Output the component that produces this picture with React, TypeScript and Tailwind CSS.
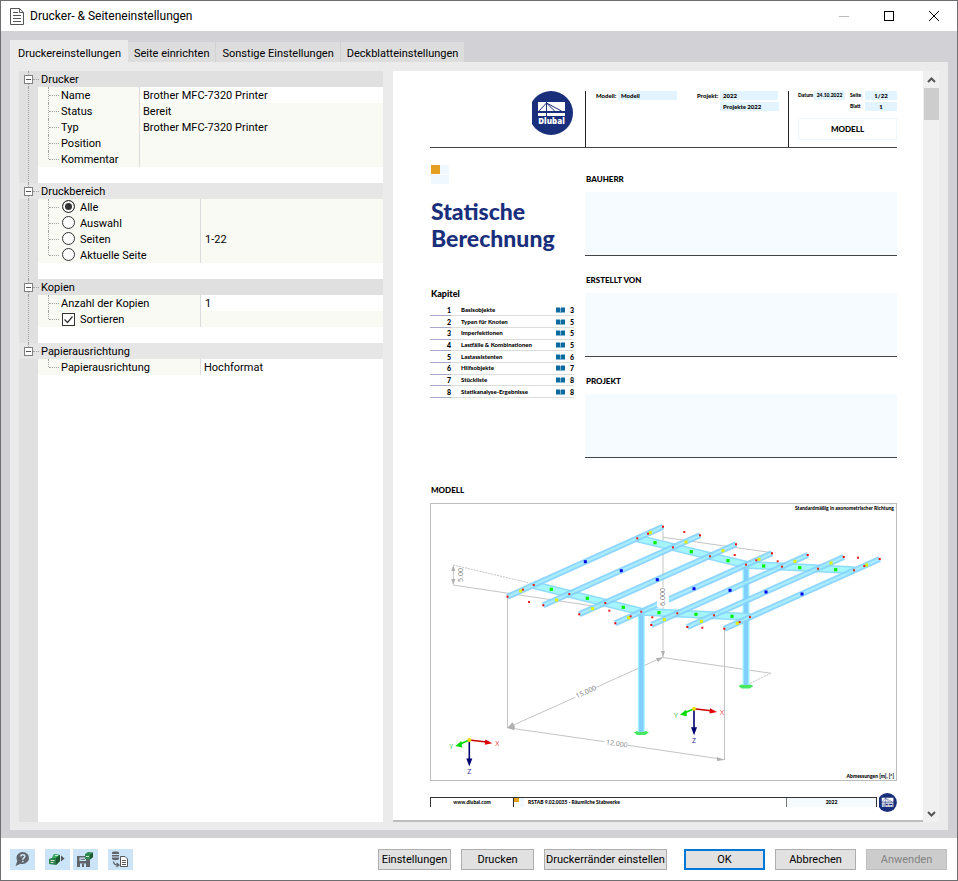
import type { ReactNode } from "react"

const chapters = [
    { title: "Basisobjekte", page: 3 },
    { title: "Typen für Knoten", page: 5 },
    { title: "Imperfektionen", page: 5 },
    { title: "Lastfälle & Kombinationen", page: 5 },
    { title: "Lastassistenten", page: 6 },
    { title: "Hilfsobjekte", page: 7 },
    { title: "Stückliste", page: 8 },
    { title: "Statikanalyse-Ergebnisse", page: 8 },
]

const tabs = ["Druckereinstellungen", "Seite einrichten", "Sonstige Einstellungen", "Deckblatteinstellungen"]

/* ---------- property tree ---------- */

type GroupProps = { title: string; last?: boolean; shade?: string; children: ReactNode }

const Group = ({ title, last, shade = "bg-[#e0e0e0]", children }: GroupProps) => (
    <section>
        <div className={`flex h-4 items-center ${shade}`}>
            <div className="flex h-4 w-[14px] flex-col items-end">
                <div className="mr-1 h-1 border-l border-dotted border-[#a0a0a0]" />
                <button
                    type="button"
                    aria-label={`${title} zuklappen`}
                    className="flex h-[9px] w-[9px] shrink-0 items-center justify-center border border-[#808080] bg-white"
                >
                    <span className="h-px w-[5px] bg-[#555]" />
                </button>
                {!last && <div className="mr-1 h-[3px] border-l border-dotted border-[#a0a0a0]" />}
            </div>
            <div className="w-[6px] border-t border-dotted border-[#a0a0a0]" />
            <h2 className="pt-[2px] pl-[2px]">{title}</h2>
        </div>
        <div className="flex">
            <div className="w-[19px] shrink-0 bg-[#e0e0e0] pl-[9px]">
                {!last && <div className="h-full border-l border-dotted border-[#a0a0a0]" />}
            </div>
            <div className="min-w-0 flex-1 pb-4">{children}</div>
        </div>
    </section>
)

type RowProps = { label: ReactNode; children?: ReactNode; wide?: boolean; white?: boolean; last?: boolean }

const Row = ({ label, children, wide, white, last }: RowProps) => (
    <div className="flex h-4 bg-[#f9faf4]">
        <div className="w-[10px] shrink-0" />
        <div className={`w-px shrink-0 border-l border-dotted border-[#a0a0a0] ${last ? "h-2" : "h-4"}`} />
        <div className="mt-2 w-[10px] shrink-0 border-t border-dotted border-[#a0a0a0]" />
        <div className={`flex shrink-0 items-center pt-[2px] pl-[2px] ${wide ? "w-[141px]" : "w-[80px]"}`}>{label}</div>
        <div className={`flex min-w-0 flex-1 items-center border-l border-[#dcdcdc] pt-[2px] pl-[3px] ${white ? "bg-white" : ""}`}>
            {children}
        </div>
    </div>
)

const Radio = ({ label, checked }: { label: string; checked?: boolean }) => (
    <label className="flex items-center gap-[5px] pl-px">
        <input
            type="radio"
            name="druckbereich"
            defaultChecked={checked}
            className="-mt-1 h-[13px] w-[13px] appearance-none rounded-full border border-[#333] bg-white checked:bg-[#333] checked:shadow-[inset_0_0_0_2px_white]"
        />
        {label}
    </label>
)

const PropertyTree = () => (
    <div className="flex w-[364px] shrink-0 flex-col bg-white leading-4">
        <Group title="Drucker">
            <Row label="Name" white>Brother MFC-7320 Printer</Row>
            <Row label="Status">Bereit</Row>
            <Row label="Typ">Brother MFC-7320 Printer</Row>
            <Row label="Position" />
            <Row label="Kommentar" last />
        </Group>
        <Group title="Druckbereich" shade="bg-[#e6e6e6]">
            <Row wide label={<Radio label="Alle" checked />} />
            <Row wide label={<Radio label="Auswahl" />} />
            <Row wide label={<Radio label="Seiten" />}>
                <input aria-label="Seiten von bis" defaultValue="1-22" className="h-4 w-full bg-transparent px-px outline-none" />
            </Row>
            <Row wide last label={<Radio label="Aktuelle Seite" />} />
        </Group>
        <Group title="Kopien">
            <Row wide white label={<label htmlFor="kopien">Anzahl der Kopien</label>}>
                <input id="kopien" defaultValue="1" className="h-4 w-full bg-transparent px-px outline-none" />
            </Row>
            <Row
                wide
                last
                label={
                    <label className="flex items-center gap-[5px] pl-px">
                        <span className="relative -mt-[2px] h-[13px] w-[13px]">
                            <input type="checkbox" defaultChecked className="block h-[13px] w-[13px] appearance-none border border-[#333] bg-white" />
                            <svg viewBox="0 0 13 13" className="pointer-events-none absolute top-0 left-0 h-[13px] w-[13px]">
                                <path d="M2.500 6.500l3 3 5-6" fill="none" stroke="#333" strokeWidth="1.200" />
                            </svg>
                        </span>
                        Sortieren
                    </label>
                }
            />
        </Group>
        <Group title="Papierausrichtung" shade="bg-[#e6e6e6]" last>
            <Row wide white last label="Papierausrichtung">Hochformat</Row>
        </Group>
        <div className="w-[19px] flex-1 bg-[#e0e0e0]" />
    </div>
)

/* ---------- report preview ---------- */

const Logo = ({ className }: { className: string }) => (
    <svg viewBox="0 0 41 44" className={className}>
        <circle cx="19" cy="22" r="22" fill="#1a2f7c" />
        <path d="M6 11h27v9H6zM6 22h27v3H6z" fill="#fff" />
        <path d="M14.500 11v14M14.500 12L7 20M14.500 12l8 8M14.500 12l15 8" stroke="#1a2f7c" fill="none" />
        <text x="19.500" y="33" textAnchor="middle" fontSize="8" fontWeight="800" fill="#fff" fontFamily="Open Sans">
            Dlubal
        </text>
    </svg>
)

const Field = ({ children, className = "" }: { children: ReactNode; className?: string }) => (
    <div className={`h-[9px] bg-[#e1f4ff] ${className}`}>{children}</div>
)

const ReportHeader = () => (
    <header className="flex h-[57px] border-b border-[#444] text-[6px] leading-[9px]">
        <div className="flex w-[155px] justify-end pr-3">
            <Logo className="h-[44px] w-[41px]" />
        </div>
        <div className="flex flex-1 border-l border-[#222] pl-[10px]">
            <span className="w-[22px]">Modell:</span>
            <Field className="w-[59px] pl-[3px]">Modell</Field>
            <span className="ml-5 w-[23px]">Projekt:</span>
            <div className="flex flex-col gap-[2px]">
                <Field className="w-[58px] pl-[3px]">2022</Field>
                <Field className="w-[59px] pl-[3px]">Projekte 2022</Field>
            </div>
        </div>
        <div className="w-[109px] border-l border-[#222] pl-[9px]">
            <div className="flex">
                <span className="w-4 text-[5px]">Datum</span>
                <Field className="w-[31px] text-center text-[5px]">24.10.2022</Field>
                <div className="ml-[5px] grid flex-1 grid-cols-[15px_1fr] gap-y-[2px]">
                    <span className="text-[5px]">Seite</span>
                    <Field className="text-center">1/22</Field>
                    <span className="text-[5px]">Blatt</span>
                    <Field className="text-center">1</Field>
                </div>
            </div>
            <div className="mt-[7px] flex h-[22px] items-center justify-center border border-[#eff8ff] text-[8px]">MODELL</div>
        </div>
    </header>
)

const Contents = () => (
    <table className="h-[93px] w-full border-collapse text-[6px] leading-[8px]">
        <tbody>
            {chapters.map((chapter, index) => (
                <tr key={chapter.title} className="border-b border-[#dcdcdc]">
                    <td className="w-[21px] border-b border-[#a9a8c8] text-right text-[7px]">{index + 1}</td>
                    <td className="pl-[10px]">{chapter.title}</td>
                    <td className="w-[9px]">
                        <svg viewBox="0 0 9 6" className="h-[6px] w-[9px]">
                            <path d="M0 .5h4v5H0zM5 .5h4v5H5z" fill="#0b6a9f" />
                            <path d="M4 1h1v5H4z" fill="#7fb4d2" />
                        </svg>
                    </td>
                    <td className="w-[9px] text-right text-[7px]">{chapter.page}</td>
                </tr>
            ))}
        </tbody>
    </table>
)

const InfoBox = ({ title }: { title: string }) => (
    <div className="flex flex-col gap-[7px]">
        <h3 className="pl-px text-[8px] leading-[11px]">{title}</h3>
        <div className="h-[64px] border-b border-[#444] bg-[#f5fbff]" />
    </div>
)

/* ---------- structure drawing ---------- */

const purlins = [
    [77.5, 93.7, 233, 23.7],
    [113.3, 102.3, 270, 32.3],
    [149.3, 111.3, 306, 41.3],
    [185.3, 120.3, 342, 50.3],
    [221.3, 122, 377.7, 52],
    [257.3, 124, 413.7, 54],
    [294.3, 125.7, 449.7, 56],
]

const nodes = [
    [103.7, 82], [139.3, 91], [175.3, 100], [211.3, 108.7], [99, 99], [179.3, 107.7], [200.7, 113.3], [222.3, 114.3],
    [93, 86.7], [218, 30.7], [207.3, 35.3], [243, 44.3], [280, 53.3], [316, 61.7], [352, 63.7], [388, 65.7],
    [424, 67.3], [254.3, 29], [304.7, 52], [326.3, 57.3], [347.7, 58.3], [428, 54.7], [434.3, 63], [247.3, 110.3],
    [284, 112.3], [320, 114], [272.3, 124.7], [309.7, 119],
]

const green = [
    [121.3, 86.3], [157.3, 95.3], [193.3, 104.3], [229, 109.7], [225, 39.7], [261.3, 48.7], [298, 57.7],
    [333.7, 63], [369.7, 64.7], [405.7, 66.7], [266, 111.3], [302, 113.3],
]

const blue = [[155.3, 58.7], [191.3, 67.7], [227.3, 76.7], [264, 85.7], [300, 87.3], [336, 89], [372, 91]]

const yellow = [
    [90.7, 88], [126.7, 97], [162.7, 105.7], [198.7, 114.7], [234.3, 116.7], [220.3, 29.7], [256, 39], [293, 47.7],
    [329, 56.3], [365, 58.3], [401, 60], [436.7, 62], [271.3, 118.3], [307.3, 120.3],
]

const Dots = ({ points, color, size }: { points: number[][]; color: string; size: number }) => (
    <g fill={color}>
        {points.map(([x, y]) => (
            <rect key={`${x}-${y}`} x={x - size / 2} y={y - size / 2} width={size} height={size} />
        ))}
    </g>
)

const Axes = ({ x, y }: { x: number; y: number }) => (
    <g transform={`translate(${x} ${y})`} fontSize="7" fontFamily="Open Sans" fontWeight="400">
        <path d="M0 0l17 2" stroke="#c00" strokeWidth="1.600" />
        <path d="M16 -.5l7 3.700-7.500 1.500z" fill="#e00000" />
        <path d="M0 0l-9 4" stroke="#0d0" strokeWidth="1.600" />
        <path d="M-8 1l-6 5 7 1.500z" fill="#00d800" />
        <path d="M0 0v20" stroke="#000070" strokeWidth="1.600" />
        <path d="M-3 18.500h6l-3 8z" fill="#000070" />
        <circle r="2" fill="#f0e000" />
        <text x="26" y="6" fill="#f04040">X</text>
        <text x="-20" y="9" fill="#30c040">Y</text>
        <text x="-2" y="34" fill="#303090">Z</text>
    </g>
)

const Structure = () => (
    <svg viewBox="0 0 465 276" className="block w-full" fontFamily="Open Sans" fontWeight="400">
        <g transform="translate(-1 -1)">
            <g fill="none" stroke="#c4c4c4">
                <path d="M77.500 95v130M294.500 127v130M233 28v56M233 104v50" />
                <path d="M77.500 224.700l68-30.500M166 184.500l67-30.500M77.500 224.700l97 14M198 242.300l96 14.200" />
                <path d="M233 154.500l108 15.800M233 34.300l109 15.400M23 82l140 21" />
                <path d="M23.300 62l80.400 19M341 170.300l-25 12" strokeDasharray="2 1" />
                <path d="M23.300 64v17" />
            </g>
            <path
                d="M23.300 62l2 6h-4zM23.300 82l2-6h-4zM77.500 224.700l5-5.500 2.500 4.500-1 3.500zM233 154.500l-7 .5 2 4zM294 257l-7-3v4zM233 154l2-6h-4z"
                fill="#b0b0b0"
            />
            <path d="M204 229.500l3-1.500h9l3 1.500-4 2.500h-8zM308.500 183l3-1.500h9l3 1.500-4 2.500h-8z" fill="#47e860" />
            <g fill="none" stroke="#a3f4fc" strokeWidth="7">
                <path d="M211.300 108v121M316 61v121" />
            </g>
            <g fill="none" stroke="#80cfff" strokeWidth="4.500">
                <path d="M211.300 108v121M316 61v121" />
            </g>
            <g fill="none" stroke="#8fdcfb" strokeWidth="8">
                <path d="M103.700 82l107.600 26.700L320 114M207.300 35.300L316 61.700l108 5.600" />
            </g>
            <g fill="none" stroke="#a5f5fd" strokeWidth="5">
                <path d="M103.700 82l107.600 26.700L320 114M207.300 35.300L316 61.700l108 5.600" />
            </g>
            {purlins.map(([x1, y1, x2, y2]) => (
                <g key={x1} opacity=".9">
                    <line x1={x1} y1={y1} x2={x2} y2={y2} stroke="#84d2fe" strokeWidth="6" />
                    <line x1={x1} y1={y1} x2={x2} y2={y2} stroke="#a0ecfe" strokeWidth="2.200" />
                </g>
            ))}
            <path d="M227 84h12v20h-12z" fill="#fff" />
            <Dots points={yellow} color="#e0f000" size={3} />
            <Dots points={green} color="#00f000" size={3.2} />
            <Dots points={blue} color="#0000e8" size={3} />
            <Dots points={nodes} color="#e82020" size={2} />
            <Dots points={purlins.map((p) => [p[0], p[1]])} color="#e80000" size={2} />
            <Dots points={purlins.map((p) => [p[2], p[3]])} color="#e80000" size={2} />
            <g fill="#808080" fontSize="7" textAnchor="middle">
                <text transform="translate(33 72) rotate(-90)">5.00</text>
                <text transform="translate(235 94) rotate(-90)">6.000</text>
                <text transform="translate(157 191) rotate(-24)">15.000</text>
                <text transform="translate(186.500 243) rotate(8)">12.000</text>
            </g>
            <Axes x={39.3} y={237} />
            <Axes x={264} y={205.7} />
        </g>
    </svg>
)

const ReportFooter = () => (
    <footer className="mt-4 flex h-5 text-[5px] leading-[8px]">
        <div className="flex h-[10px] flex-1 border-x border-t border-[#333]">
            <div className="w-[83px] border-r border-[#333] text-center">www.dlubal.com</div>
            <div className="grid w-[10px] grid-cols-2 gap-px">
                <span className="h-[4px] bg-[#e5a023]" />
                <span className="h-[4px] bg-[#eff8ff]" />
                <span className="h-[4px]" />
                <span className="h-[4px] bg-[#eff8ff]" />
            </div>
            <div className="flex-1 pl-[4px]">RSTAB 9.02.0035 - Räumliche Stabwerke</div>
            <div className="w-[90px] border-l border-[#777] bg-[#f5fbff] text-center">2022</div>
        </div>
        <Logo className="-mt-1 ml-[2px] h-[19px] w-[18px]" />
    </footer>
)

const Preview = () => (
    <div className="flex min-w-0 flex-1">
        <div className="min-w-0 flex-1 border-b-2 border-[#bdbdbd] bg-white pt-5 pr-[26px] pl-[37px] font-['Lato',sans-serif] font-black text-black">
            <ReportHeader />
            <div className="mt-[17px] flex gap-[11px]">
                <div className="w-[144px] shrink-0">
                    <div className="ml-px grid w-[18px] grid-cols-2 gap-y-px">
                        <span className="h-[9px] bg-[#e5a023]" />
                        <span className="h-[9px] bg-[#eff8ff]" />
                        <span className="col-span-2 h-[9px] bg-[#eff8ff]" />
                    </div>
                    <h1 className="mt-[14px] pl-px text-[23px] leading-[27px] text-[#1a2f7c]">
                        Statische
                        <br />
                        Berechnung
                    </h1>
                    <h3 className="mt-9 mb-[5px] pl-px text-[9px] leading-[12px]">Kapitel</h3>
                    <Contents />
                </div>
                <div className="flex flex-1 flex-col gap-[19px] pt-[9px]">
                    <InfoBox title="BAUHERR" />
                    <InfoBox title="ERSTELLT VON" />
                    <InfoBox title="PROJEKT" />
                </div>
            </div>
            <h3 className="mt-[26px] mb-[7px] pl-px text-[8px] leading-[12px]">MODELL</h3>
            <div className="relative border border-[#bdbdbd]">
                <Structure />
                <span className="absolute top-0 right-[2px] text-[5px] leading-[8px]">Standardmäßig in axonometrischer Richtung</span>
                <span className="absolute right-[2px] bottom-0 text-[5px] leading-[8px]">Abmessungen [m], [°]</span>
            </div>
            <ReportFooter />
        </div>
        <div className="flex w-[16px] flex-col items-center bg-[#f0f0f0]">
            <svg viewBox="0 0 15 17" className="h-[17px] w-[15px]">
                <path d="M4 11l3.500-3.500L11 11" fill="none" stroke="#555" strokeWidth="2" />
            </svg>
            <div className="h-8 w-[15px] bg-[#cdcdcd]" />
            <div className="flex-1" />
            <svg viewBox="0 0 15 17" className="h-[17px] w-[15px]">
                <path d="M4 7l3.500 3.500L11 7" fill="none" stroke="#555" strokeWidth="2" />
            </svg>
        </div>
    </div>
)

/* ---------- dialog chrome ---------- */

const TitleBar = () => (
    <div className="flex h-[30px] shrink-0 items-center bg-white pr-[18px] pl-[9px]">
        <svg viewBox="0 0 14 17" className="h-[17px] w-[14px]" fill="none" stroke="#555">
            <path d="M.5.500h9l4 4v12H.500zM9.500.500v4h4M3 4.500h5M3 7.500h8M3 10.500h8M3 13.500h8" />
        </svg>
        <h1 className="flex-1 pl-[6px] text-[12px]">Drucker- &amp; Seiteneinstellungen</h1>
        <div className="flex items-center gap-[35px]">
            <button type="button" aria-label="Minimieren" className="h-px w-[10px] bg-[#bbb]" />
            <button type="button" aria-label="Maximieren" className="h-[10px] w-[10px] border border-black" />
            <button type="button" aria-label="Schließen">
                <svg viewBox="0 0 10 10" className="h-[10px] w-[10px]" stroke="#000">
                    <path d="M0 0l10 10M10 0L0 10" />
                </svg>
            </button>
        </div>
    </div>
)

const IconButton = ({ label, children, className = "" }: { label: string; children: ReactNode; className?: string }) => (
    <button type="button" aria-label={label} className={`h-[21px] w-[25px] bg-[#cce4f7] ${className}`}>
        <svg viewBox="0 0 25 21" className="h-[21px] w-[25px]">{children}</svg>
    </button>
)

const DialogButton = ({ children, className }: { children: ReactNode; className: string }) => (
    <button type="button" className={`flex h-[21px] items-center justify-center pt-[2px] whitespace-nowrap ${className}`}>
        {children}
    </button>
)

const BottomBar = () => (
    <div className="flex h-[42px] shrink-0 items-center bg-white pr-[10px] pl-[9px]">
        <div className="flex flex-1">
            <IconButton label="Hilfe">
                <path d="M12.500 3a6.500 6 0 1 1-2 11.700L5.500 17l1.800-5A6.300 6 0 0 1 12.500 3z" fill="#5f656b" />
                <path d="M10.800 7.500c0-2.200 4-2.200 4 0 0 1.500-2 1.400-2 3.200M12.800 11.700v1.500" fill="none" stroke="#cce4f7" strokeWidth="1.500" />
            </IconButton>
            <IconButton label="Einstellungen laden" className="ml-[10px]">
                <path d="M4 10l3-1 2-4 6 1v6l-4 4-7-1z" fill="#2c8049" />
                <path d="M7 9l2-4 6 1-4 3z" fill="#3fae68" />
                <path d="M11 9l4-3v6l-4 4z" fill="#1c5732" />
                <path d="M5.500 11.500h4M5.500 13.500h3" stroke="#cfe8d5" />
                <path d="M10 6.500h3" stroke="#cfe8d5" />
                <path d="M16 6.500l3.500 3-3.500 3z" fill="#555" />
            </IconButton>
            <IconButton label="Einstellungen speichern" className="ml-[3px]">
                <path d="M4 7h10l3 3v8H4z" fill="#5f656b" />
                <path d="M6.500 8.500H13V12H6.500zM7 14.500h6V18H7z" fill="#cce4f7" />
                <path d="M7.500 10.300H12" stroke="#5f656b" />
                <path d="M9 14.500h2V18H9z" fill="#5f656b" />
                <path d="M12 5l3-2 5 .5V8l-3 2.500-5-.5z" fill="#2f8a4f" />
                <path d="M17 6l3-2.500V8l-3 2.500z" fill="#1c5732" />
                <path d="M13 7.500h3" stroke="#cfe8d5" />
            </IconButton>
            <IconButton label="Bericht übernehmen" className="ml-[10px]">
                <path d="M4 3.500C4 2 11 2 11 3.500V10c0 1.500-7 1.500-7 0z" fill="#5f656b" />
                <path d="M4 5.500h7M4 8h7" stroke="#cce4f7" />
                <path d="M5.500 12.500c0 2.500 1.500 3.500 4.500 3.500M8.500 14l2.500 2-2.500 2" fill="none" stroke="#5f656b" strokeWidth="1.300" />
                <path d="M12.500 7.500h4.500l2.500 2.500v7.500h-7z" fill="#fff" stroke="#555" />
                <path d="M14 11.500h4M14 13.500h4M14 15.500h4" stroke="#555" />
            </IconButton>
        </div>
        <div className="flex gap-[10px]">
            <DialogButton className="w-[73px] border border-[#adadad] bg-[#e1e1e1]">Einstellungen</DialogButton>
            <DialogButton className="w-[73px] border border-[#adadad] bg-[#e1e1e1]">Drucken</DialogButton>
            <DialogButton className="w-[123px] border border-[#adadad] bg-[#e1e1e1]">Druckerränder einstellen</DialogButton>
            <DialogButton className="ml-[7px] w-[81px] border-2 border-[#0078d7] bg-[#e1e1e1]">OK</DialogButton>
            <DialogButton className="w-[81px] border border-[#adadad] bg-[#e1e1e1]">Abbrechen</DialogButton>
            <DialogButton className="w-[81px] border border-[#bfbfbf] bg-[#cccccc] text-[#838383]">Anwenden</DialogButton>
        </div>
    </div>
)

export default function App() {
    return (
        <div className="flex min-h-screen flex-col border border-[#6e6e70] bg-[#d2d1d6] font-['Roboto',sans-serif] text-[11px] text-black">
            <TitleBar />
            <div className="flex flex-1 flex-col px-[9px] pt-[9px] pb-2">
                <div className="flex items-end" role="tablist">
                    {tabs.map((tab, index) => (
                        <button
                            key={tab}
                            type="button"
                            role="tab"
                            aria-selected={index === 0}
                            className={
                                index === 0
                                    ? "h-[22px] bg-[#ebebeb] pt-[6px] pr-[7px] pl-2 whitespace-nowrap"
                                    : "h-[20px] border-r border-[#d2d1d6] bg-[#dddddd] px-[6px] pt-[4px] whitespace-nowrap"
                            }
                        >
                            {tab}
                        </button>
                    ))}
                </div>
                <div className="flex flex-1 gap-[10px] bg-[#ebebeb] px-[9px] pt-[9px] pb-2">
                    <PropertyTree />
                    <Preview />
                </div>
            </div>
            <BottomBar />
        </div>
    )
}
